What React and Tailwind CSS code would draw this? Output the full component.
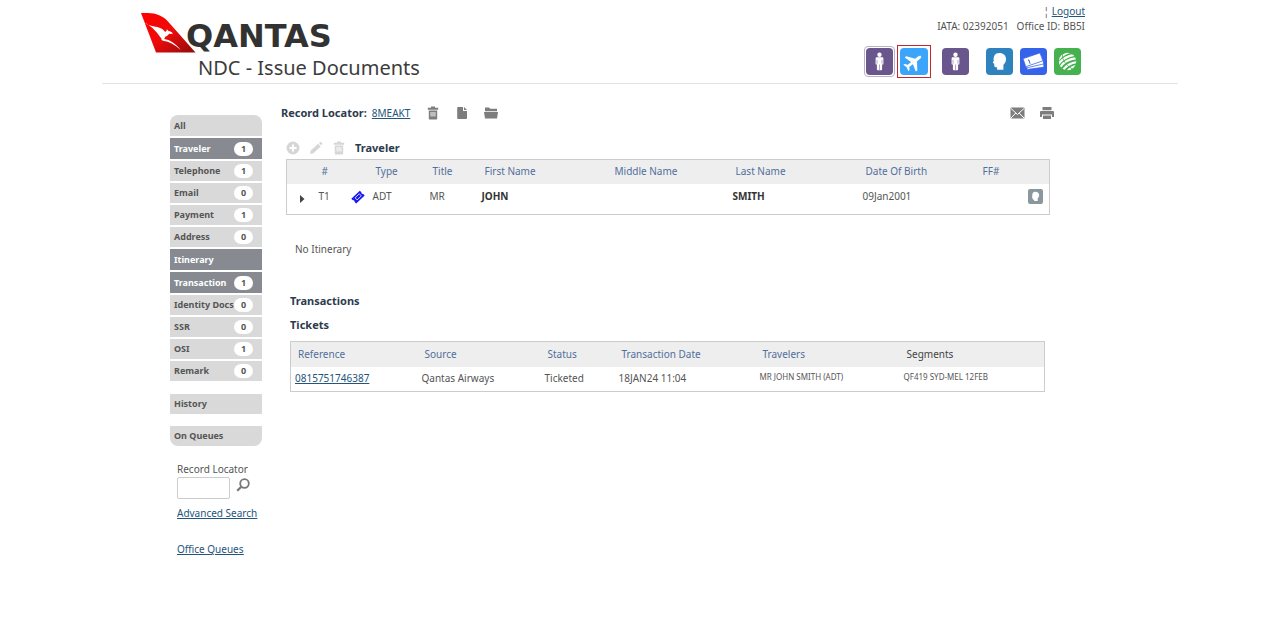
import { useState } from 'react'

const menuItems = [
  { name: 'All' },
  { name: 'Traveler', count: 1, dark: true },
  { name: 'Telephone', count: 1 },
  { name: 'Email', count: 0 },
  { name: 'Payment', count: 1 },
  { name: 'Address', count: 0 },
  { name: 'Itinerary', dark: true },
  { name: 'Transaction', count: 1, dark: true },
  { name: 'Identity Docs', count: 0 },
  { name: 'SSR', count: 0 },
  { name: 'OSI', count: 1 },
  { name: 'Remark', count: 0 },
]

const PersonIcon = () => (
  <svg viewBox="0 0 27 27" className="w-full h-full" fill="#fff" aria-hidden="true">
    <circle cx="13.5" cy="6.8" r="2.2" />
    <path d="M10.900 9.300h5.200c.8 0 1.300.5 1.300 1.300v5.400c0 .7-1.100.8-1.300.2v5.100c0 .6-.4.9-1 .9h-3.200c-.6 0-1-.3-1-.9v-5.100c-.2.6-1.300.5-1.300-.2v-5.400c0-.8.5-1.300 1.300-1.300z" />
    <path d="M13.500 16.500v5.500M11 11.800v4M16 11.800v4" stroke="#69568c" strokeWidth=".5" />
  </svg>
)

const PlaneIcon = () => (
  <svg viewBox="0 0 27 27" className="w-full h-full" fill="#fff" aria-hidden="true">
    <path
      transform="translate(13 14) rotate(52)"
      d="M0-9.500c.9 0 1.500 1.200 1.500 2.600v3.600L9 2.200v1.900L1.500 1.900l-.3 4.300L4 8.200v1.500L0 8.700l-4 1V8.200l2.800-2-.3-4.300L-9 4.100V2.200l7.500-5.500v-3.600c0-1.400.6-2.600 1.500-2.600z"
    />
  </svg>
)

const HeadIcon = () => (
  <svg viewBox="0 0 27 27" className="w-full h-full" fill="#fff" aria-hidden="true">
    <path d="M13.400 5c4 0 6.600 2.500 6.600 6.200 0 2.500-1.300 4.300-2.600 5.700v4.900h-6.300v-2.600c-1.500.1-2.600-.1-2.800-1.200l-.1-2.300-1.100-.7c-.4-.3-.1-.8.6-2C7.300 8.500 8.700 5 13.400 5z" />
  </svg>
)

const CardsIcon = () => (
  <svg viewBox="0 0 27 27" className="w-full h-full" aria-hidden="true">
    <g stroke="#3563e9" strokeWidth=".7" fill="#fff">
      <rect x="6.500" y="12" width="17" height="8.500" rx="1" transform="rotate(-8 14 16)" />
      <rect x="5" y="9.800" width="18" height="8.500" rx="1" transform="rotate(-13 13 14)" />
      <rect x="4" y="7.500" width="18" height="8.500" rx="1" transform="rotate(-19 13 12)" />
    </g>
    <path d="M8.800 11.800l1.300 4M7.900 12.600l1-.8" stroke="#3563e9" strokeWidth="1" fill="none" />
  </svg>
)

const GlobeIcon = () => (
  <svg viewBox="0 0 27 27" className="w-full h-full" fill="none" aria-hidden="true">
    <clipPath id="globe">
      <circle cx="13.500" cy="13.500" r="8.700" />
    </clipPath>
    <g clipPath="url(#globe)">
      <g stroke="#fff" strokeWidth="2.300">
        <path d="M4 12C7 8 11 5.500 16 4" />
        <path d="M4 16.500C7.500 11.500 13 8 20 6.800" />
        <path d="M5.500 20C9 14.500 14.500 11 23 10.200" />
        <path d="M8.500 22.500C12 17.500 16.500 14.500 24 14" />
        <path d="M13 24c2.500-3.500 5.500-5.500 10-6" />
      </g>
      <path d="M8.500 6c-.5 6 3 11 10 15" stroke="#45b14f" strokeWidth=".8" />
    </g>
  </svg>
)

const TrashIcon = () => (
  <svg viewBox="0 0 14 14" className="w-[14px] h-[14px]" fill="currentColor" aria-hidden="true">
    <path d="M5 .5h4v1.200h3.200v2H1.800v-2H5z" />
    <path fillRule="evenodd" d="M2.800 4.500h8.400v8.200c0 .4-.3.8-.8.8H3.600c-.5 0-.8-.4-.8-.8zm1.800 1.600v4.400h.9V6.100zm1.900 0v4.400h1V6.100zm2 0v4.400h.9V6.100z" />
  </svg>
)

const FileIcon = () => (
  <svg viewBox="0 0 14 14" className="w-[14px] h-[14px]" fill="currentColor" aria-hidden="true">
    <path d="M3 1h5v4h4v7.200c0 .5-.3.800-.8.800H3c-.5 0-.8-.3-.8-.8V1.800C2.200 1.300 2.500 1 3 1z" />
    <path d="M9 1l3 3H9z" />
  </svg>
)

const FolderIcon = () => (
  <svg viewBox="0 0 14 14" className="w-[14px] h-[14px]" fill="currentColor" aria-hidden="true">
    <path d="M1 1.500h4l1.200 1.300H13v2.400H1z" />
    <path d="M0 6h14l-1 6.500H1z" />
  </svg>
)

const MailIcon = () => (
  <svg viewBox="0 0 15 14" className="w-[15px] h-[14px]" fill="currentColor" aria-hidden="true">
    <rect x=".5" y="1.500" width="14" height="11" rx="1" />
    <path d="M1 2.500l6.500 6 6.500-6M1 12l4.800-5M14 12L9.200 7" fill="none" stroke="#fff" strokeWidth="1" />
  </svg>
)

const PrintIcon = () => (
  <svg viewBox="0 0 14 14" className="w-[14px] h-[14px]" fill="currentColor" aria-hidden="true">
    <path d="M2.500 1h9v3.200h-9z" />
    <path d="M1.200 5h11.600c.7 0 1.200.5 1.200 1.200V11h-2V8.600H2V11H0V6.200C0 5.500.5 5 1.200 5z" />
    <path d="M3 9.500h8V13H3z" />
  </svg>
)

const PlusIcon = () => (
  <svg viewBox="0 0 14 14" className="w-[14px] h-[14px]" aria-hidden="true">
    <circle cx="7" cy="7" r="6.500" fill="currentColor" />
    <path d="M7 3.500v7M3.500 7h7" stroke="#fff" strokeWidth="2" />
  </svg>
)

const PencilIcon = () => (
  <svg viewBox="0 0 14 14" className="w-[14px] h-[14px]" fill="currentColor" aria-hidden="true">
    <path d="M1 13l.8-3.500 7.400-6.700 2.500 2.600-7.300 6.900z" />
    <path d="M10 2l1-.8c.5-.4 1-.3 1.400.1l.7.800c.4.500.4.900 0 1.300l-.8.900z" />
  </svg>
)

const TicketIcon = () => (
  <svg viewBox="0 0 14 14" className="w-[14px] h-[14px]" aria-hidden="true">
    <path d="M.3 8.800L8.800.8l1.600 1.500c-.2 1.200.6 1.900 1.800 1.700l1.500 1.500-8.500 7.900-1.600-1.500c.2-1.200-.6-1.900-1.800-1.700z" fill="#1a1af0" />
    <path d="M4.100 7.800l4.200-4 2 2.100-4.200 4z" fill="none" stroke="#fff" strokeWidth=".8" />
  </svg>
)

const SearchIcon = () => (
  <svg viewBox="0 0 14 14" className="w-[14px] h-[14px]" fill="none" stroke="#777" aria-hidden="true">
    <circle cx="8.500" cy="5.500" r="4.300" strokeWidth="1.800" />
    <path d="M5.300 8.700L1.200 12.800" strokeWidth="2.200" />
  </svg>
)

const Logo = () => (
  <a href="#" className="flex text-[#323232]">
    <svg viewBox="0 0 55 40" className="w-[55px] h-[40px]" aria-hidden="true">
      <defs>
        <linearGradient id="tail" x1="0" y1="0" x2="1" y2="1">
          <stop offset="0" stopColor="#f00" />
          <stop offset=".5" stopColor="#f00a0a" />
          <stop offset="1" stopColor="#8e0d0d" />
        </linearGradient>
      </defs>
      <path d="M0 0h7c8 0 15 3 20 8.500L54.500 39.500H15z" fill="url(#tail)" />
      {/* kangaroo: back and tail, ears, arm, leg */}
      <path
        d="M3.300 9.500c4 3.200 8 3.300 13 4.600 4.200 1.200 6.500 2.800 7.800 4.800 1.500-.5 1.900-1.400 1.600-2.800l1.800 2c1.800 0 3.200.9 4.500 2.400-1.300.5-2.700.5-4 .3-.8 1.600-2 2.400-3.500 2.700l-1.300 2.600c5.500.8 11 4.200 16.500 11-5.500-5.300-11.500-8.600-17.500-9.300-1.300-.2-1.900-1-1.800-2.300-4-5.500-9-12-17.100-16z"
        fill="#fff"
      />
    </svg>
    <span className="-ml-[10px] mt-[7px] font-['DejaVu_Sans'] text-[32px] leading-[33px] font-bold">QANTAS</span>
  </a>
)

const IconButton = ({ label, children, className = '' }) => (
  <button type="button" aria-label={label} className={`shrink-0 cursor-pointer ${className}`}>
    {children}
  </button>
)

const Header = () => (
  <header className="flex justify-between h-[84px] border-b border-[#e2e2e2] pl-[39px] pr-[93px]">
    <div className="pt-[13px]">
      <Logo />
      <h1 className="ml-[57px] text-[20px] leading-[30px] text-[#3c3c3c]">NDC - Issue Documents</h1>
    </div>

    <div className="flex flex-col items-end pt-1">
      <div className="leading-[15px]">
        ¦ <a href="#" className="text-[#24547c] underline">Logout</a>
      </div>
      <div className="flex gap-2 leading-[15px]">
        <span>IATA: 02392051</span>
        <span>Office ID: BB5I</span>
      </div>
      <div className="flex items-center mt-[11px] mr-1">
        <div className="border border-[#b9b0cc] rounded-sm p-px">
          <IconButton label="Traveler" className="block w-[27px] h-[27px] rounded-sm bg-[#69568c]"><PersonIcon /></IconButton>
        </div>
        <div className="ml-[2px] border border-[#c4282d] p-[2px]">
          <IconButton label="Flights" className="block w-[28px] h-[27px] rounded-sm bg-[#3ba5fb]"><PlaneIcon /></IconButton>
        </div>
        <IconButton label="Profile" className="ml-[11px] w-[27px] h-[27px] rounded-sm bg-[#69568c]"><PersonIcon /></IconButton>
        <IconButton label="Customer" className="ml-[17px] w-[27px] h-[27px] rounded-sm bg-[#2e83bf]"><HeadIcon /></IconButton>
        <IconButton label="Tickets" className="ml-[7px] w-[27px] h-[27px] rounded-sm bg-[#3563e9]"><CardsIcon /></IconButton>
        <IconButton label="World" className="ml-[7px] w-[27px] h-[27px] rounded-sm bg-[#45b14f]"><GlobeIcon /></IconButton>
      </div>
    </div>
  </header>
)

const Sidebar = () => {
  const [locator, setLocator] = useState('')

  return (
    <aside className="w-[92px] shrink-0">
      <nav className="flex flex-col gap-[2px] font-bold text-[9px] text-[#555]">
        {menuItems.map((item) => (
          <a
            key={item.name}
            href="#"
            className={`flex items-center justify-between pl-1 pr-[9px] whitespace-nowrap first:h-[21px] first:rounded-t-lg ${
              item.dark ? 'h-[21px] bg-[#878b91] text-white' : 'h-5 bg-[#d9d9d9]'
            }`}
          >
            {item.name}
            {item.count !== undefined && (
              <span className="-ml-1 w-[19px] h-[14px] rounded-full bg-white text-center leading-[14px] text-[#555]">{item.count}</span>
            )}
          </a>
        ))}
        <a href="#" className="flex items-center h-5 mt-[11px] pl-1 bg-[#d9d9d9]">History</a>
        <a href="#" className="flex items-center h-5 mt-[10px] pl-1 bg-[#d9d9d9] rounded-b-lg">On Queues</a>
      </nav>

      <form className="mt-[15px] pl-[7px]" onSubmit={(e) => e.preventDefault()}>
        <label htmlFor="locator" className="block leading-4">Record Locator</label>
        <div className="flex items-start gap-[6px]">
          <input
            id="locator"
            value={locator}
            onChange={(e) => setLocator(e.target.value)}
            className="w-[53px] h-[22px] border border-[#ccc] rounded-xs px-1"
          />
          <IconButton label="Search" className="mt-px"><SearchIcon /></IconButton>
        </div>
      </form>
      <div className="flex flex-col items-start gap-5 mt-[6px] pl-[7px] leading-4 whitespace-nowrap text-[#24547c] underline">
        <a href="#">Advanced Search</a>
        <a href="#">Office Queues</a>
      </div>
    </aside>
  )
}

const TravelerTable = () => (
  <table className="w-full table-fixed border border-[#ccc] text-left whitespace-nowrap">
    <colgroup>
      <col className="w-[32px]" />
      <col className="w-[32px]" />
      <col className="w-[22px]" />
      <col className="w-[57px]" />
      <col className="w-[52px]" />
      <col className="w-[130px]" />
      <col className="w-[121px]" />
      <col className="w-[130px]" />
      <col className="w-[117px]" />
      <col />
      <col className="w-[22px]" />
    </colgroup>
    <thead>
      <tr className="h-[24px] bg-[#eee] text-[#516f9b] *:font-normal *:p-0 *:pl-[3px]">
        <th></th>
        <th>#</th>
        <th></th>
        <th>Type</th>
        <th>Title</th>
        <th>First Name</th>
        <th>Middle Name</th>
        <th>Last Name</th>
        <th>Date Of Birth</th>
        <th>FF#</th>
        <th></th>
      </tr>
    </thead>
    <tbody>
      <tr className="h-[31px] *:p-0 *:pb-1">
        <td>
          <IconButton label="Expand" className="block ml-[13px] mt-1">
            <svg viewBox="0 0 5 8" className="w-[5px] h-2" aria-hidden="true"><path d="M0 0l4.500 4L0 8z" fill="#444" /></svg>
          </IconButton>
        </td>
        <td>T1</td>
        <td><TicketIcon /></td>
        <td>ADT</td>
        <td>MR</td>
        <td className="font-bold text-[#333]">JOHN</td>
        <td></td>
        <td className="font-bold text-[#333]">SMITH</td>
        <td>09Jan2001</td>
        <td></td>
        <td>
          <IconButton label="Traveler profile" className="block w-[15px] h-[15px] bg-[#8a979f] rounded-xs"><HeadIcon /></IconButton>
        </td>
      </tr>
    </tbody>
  </table>
)

const TicketsTable = () => (
  <table className="w-full table-fixed border border-[#ccc] text-left whitespace-nowrap">
    <colgroup>
      <col className="w-[131px]" />
      <col className="w-[123px]" />
      <col className="w-[74px]" />
      <col className="w-[141px]" />
      <col className="w-[144px]" />
      <col />
    </colgroup>
    <thead>
      <tr className="h-[25px] bg-[#eee] text-[#516f9b] *:font-normal *:p-0 *:pl-[3px] *:first:pl-[7px]">
        <th>Reference</th>
        <th>Source</th>
        <th>Status</th>
        <th>Transaction Date</th>
        <th>Travelers</th>
        <th className="text-[#444]">Segments</th>
      </tr>
    </thead>
    <tbody>
      <tr className="h-[25px] *:p-0 *:first:pl-1">
        <td><a href="#" className="text-[#24547c] underline">0815751746387</a></td>
        <td>Qantas Airways</td>
        <td>Ticketed</td>
        <td>18JAN24 11:04</td>
        <td className="align-top text-[8px] leading-5">MR JOHN SMITH (ADT)</td>
        <td className="align-top text-[8px] leading-5">QF419 SYD-MEL 12FEB</td>
      </tr>
    </tbody>
  </table>
)

const App = () => {
  return (
    <div className="min-h-screen bg-white font-['Noto_Sans',sans-serif] text-[10px] text-[#555]">
      <div className="max-w-[1076px] mx-auto">
        <Header />

        <div className="flex gap-[19px] pl-[68px]">
          <div className="pt-[31px]">
            <Sidebar />
          </div>

          <main className="flex-1 min-w-0 pt-5 pr-[129px]">
            {/* record toolbar */}
            <div className="flex items-center h-[18px] text-[#7d7d7d]">
              <h2 className="text-[11px] font-bold text-[#2d3b4e]">Record Locator:</h2>
              <a href="#" className="ml-[5px] mr-4 text-[#24547c] underline">8MEAKT</a>
              <div className="flex gap-[15px]">
                <IconButton label="Delete"><TrashIcon /></IconButton>
                <IconButton label="New"><FileIcon /></IconButton>
                <IconButton label="Open"><FolderIcon /></IconButton>
              </div>
              <div className="flex gap-[15px] ml-auto -mr-[5px]">
                <IconButton label="Email"><MailIcon /></IconButton>
                <IconButton label="Print"><PrintIcon /></IconButton>
              </div>
            </div>

            {/* travelers */}
            <section className="mt-4 ml-[5px]">
              <div className="flex items-center gap-[9px] h-[20px] mb-px text-[#d6d6d6]">
                <IconButton label="Add"><PlusIcon /></IconButton>
                <IconButton label="Edit"><PencilIcon /></IconButton>
                <IconButton label="Remove"><TrashIcon /></IconButton>
                <h2 className="text-[11px] font-bold text-[#2d3b4e]">Traveler</h2>
              </div>
              <div className="-mr-px">
                <TravelerTable />
              </div>
            </section>

            <p className="mt-[26px] ml-[14px] leading-4">No Itinerary</p>

            {/* transactions */}
            <section className="mt-9 ml-[9px] mr-1">
              <h2 className="text-[11px] leading-4 font-bold text-[#2d3b4e]">Transactions</h2>
              <h3 className="my-2 text-[11px] leading-4 font-bold text-[#2d3b4e]">Tickets</h3>
              <TicketsTable />
            </section>
          </main>
        </div>
      </div>
    </div>
  )
}

export default App
